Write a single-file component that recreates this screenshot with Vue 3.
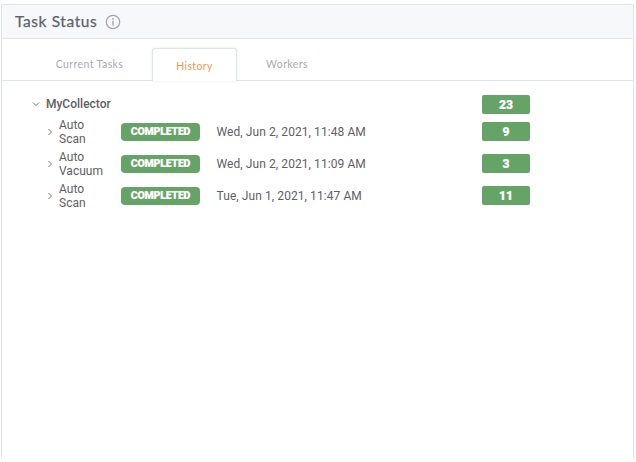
<script setup>
const rows = [
  { name: 'Auto Scan', date: 'Wed, Jun 2, 2021, 11:48 AM', count: 9 },
  { name: 'Auto Vacuum', date: 'Wed, Jun 2, 2021, 11:09 AM', count: 3 },
  { name: 'Auto Scan', date: 'Tue, Jun 1, 2021, 11:47 AM', count: 11 }
]
</script>

<template>
  <div class="page">
    <section class="card">
      <header class="head">
        <h1>Task Status</h1>
        <svg class="info" width="16" height="16" viewBox="0 0 16 16" aria-hidden="true">
          <circle cx="8" cy="8" r="6.7" fill="none" stroke="#a3a6a9" stroke-width="1.2" />
          <circle cx="8" cy="4.9" r="0.9" fill="#a3a6a9" />
          <rect x="7.3" y="6.8" width="1.4" height="4.8" fill="#a3a6a9" />
        </svg>
      </header>
      <nav class="tabs">
        <span class="tab first">Current Tasks</span>
        <span class="tab active">History</span>
        <span class="tab last">Workers</span>
      </nav>
      <div class="tree">
        <div class="root">
          <svg class="chev" width="8" height="8" viewBox="0 0 8 8" aria-hidden="true"><path d="M1 2.5 4 5.5 7 2.5" /></svg>
          <span class="root-name">MyCollector</span>
          <span class="count">23</span>
        </div>
        <div v-for="(r, i) in rows" :key="i" class="row">
          <svg class="chev" width="8" height="8" viewBox="0 0 8 8" aria-hidden="true"><path d="M2.5 1 5.5 4 2.5 7" /></svg>
          <span class="name">{{ r.name }}</span>
          <span class="status">COMPLETED</span>
          <span class="date">{{ r.date }}</span>
          <span class="count">{{ r.count }}</span>
        </div>
      </div>
    </section>
  </div>
</template>

<style scoped>
.page {
  width: 636px;
  height: 462px;
  padding: 4px 2px 4px 1px;
  box-sizing: border-box;
  background: #fff;
  font-family: Roboto, sans-serif;
}
.card {
  height: 100%;
  box-sizing: border-box;
  border: 1px solid #dee5eb;
  border-bottom: 0;
  background: #fff;
}
.head {
  height: 34px;
  box-sizing: border-box;
  background: #f6f8fa;
  border-bottom: 1px solid #dee5eb;
  padding-left: 13px;
  display: flex;
  align-items: center;
  gap: 8px;
}
h1 {
  margin: 0 0 2px;
  font: 400 15.5px Lato, sans-serif;
  letter-spacing: 0.6px;
  -webkit-text-stroke: 0.25px #5f6368;
  color: #5f6368;
}
.tabs {
  height: 42px;
  box-sizing: border-box;
  border-bottom: 1px solid #dee5eb;
  display: flex;
  align-items: flex-end;
  font: 400 10.5px Lato, sans-serif;
  letter-spacing: 0.4px;
  color: #a9acaf;
}
.tab {
  height: 33px;
  box-sizing: border-box;
  display: flex;
  align-items: center;
  justify-content: center;
  width: 85px;
}
.tab.first {
  width: 150px;
  padding-left: 25px;
}
.tab.last {
  width: 100px;
}
.tab.active {
  color: #f8964f;
  background: #fff;
  border: 1px solid #dee5eb;
  border-bottom: 0;
  border-radius: 3px 3px 0 0;
  box-shadow: 0 0 3px rgba(160, 175, 190, 0.25);
  margin-bottom: -1px;
  padding-top: 1px;
  position: relative;
}
.tree {
  padding-top: 14px;
  color: #5f6063;
}
.root,
.row {
  display: flex;
  align-items: center;
}
.root {
  height: 19px;
  margin-bottom: 1.5px;
  padding-left: 30px;
}
.root .chev {
  margin-bottom: 1px;
}
.root-name {
  margin-left: 6px;
  margin-bottom: 2px;
  font-size: 12px;
  font-weight: 500;
  width: 436px;
}
.row {
  height: 32px;
  padding-left: 44px;
}
.chev {
  flex: none;
}
.chev path {
  fill: none;
  stroke: #77797c;
  stroke-width: 1;
}
.name {
  margin-left: 5px;
  width: 62px;
  font-size: 12px;
  line-height: 14px;
  flex: none;
  box-sizing: border-box;
  padding-right: 18px;
}
.status {
  width: 79px;
  height: 18px;
  flex: none;
  border-radius: 4px;
  background: #66a366;
  color: #fff;
  font-size: 10.5px;
  font-weight: 900;
  letter-spacing: -0.2px;
  -webkit-text-stroke: 0.2px #fff;
  display: flex;
  align-items: center;
  justify-content: center;
}
.date {
  margin-left: 16.5px;
  width: 265.5px;
  font-size: 12px;
  letter-spacing: 0.08px;
  flex: none;
}
.count {
  width: 48px;
  height: 19px;
  flex: none;
  border-radius: 2px;
  background: #66a366;
  color: #fff;
  font-size: 12px;
  font-weight: 900;
  -webkit-text-stroke: 0.2px #fff;
  display: flex;
  align-items: center;
  justify-content: center;
}
</style>
